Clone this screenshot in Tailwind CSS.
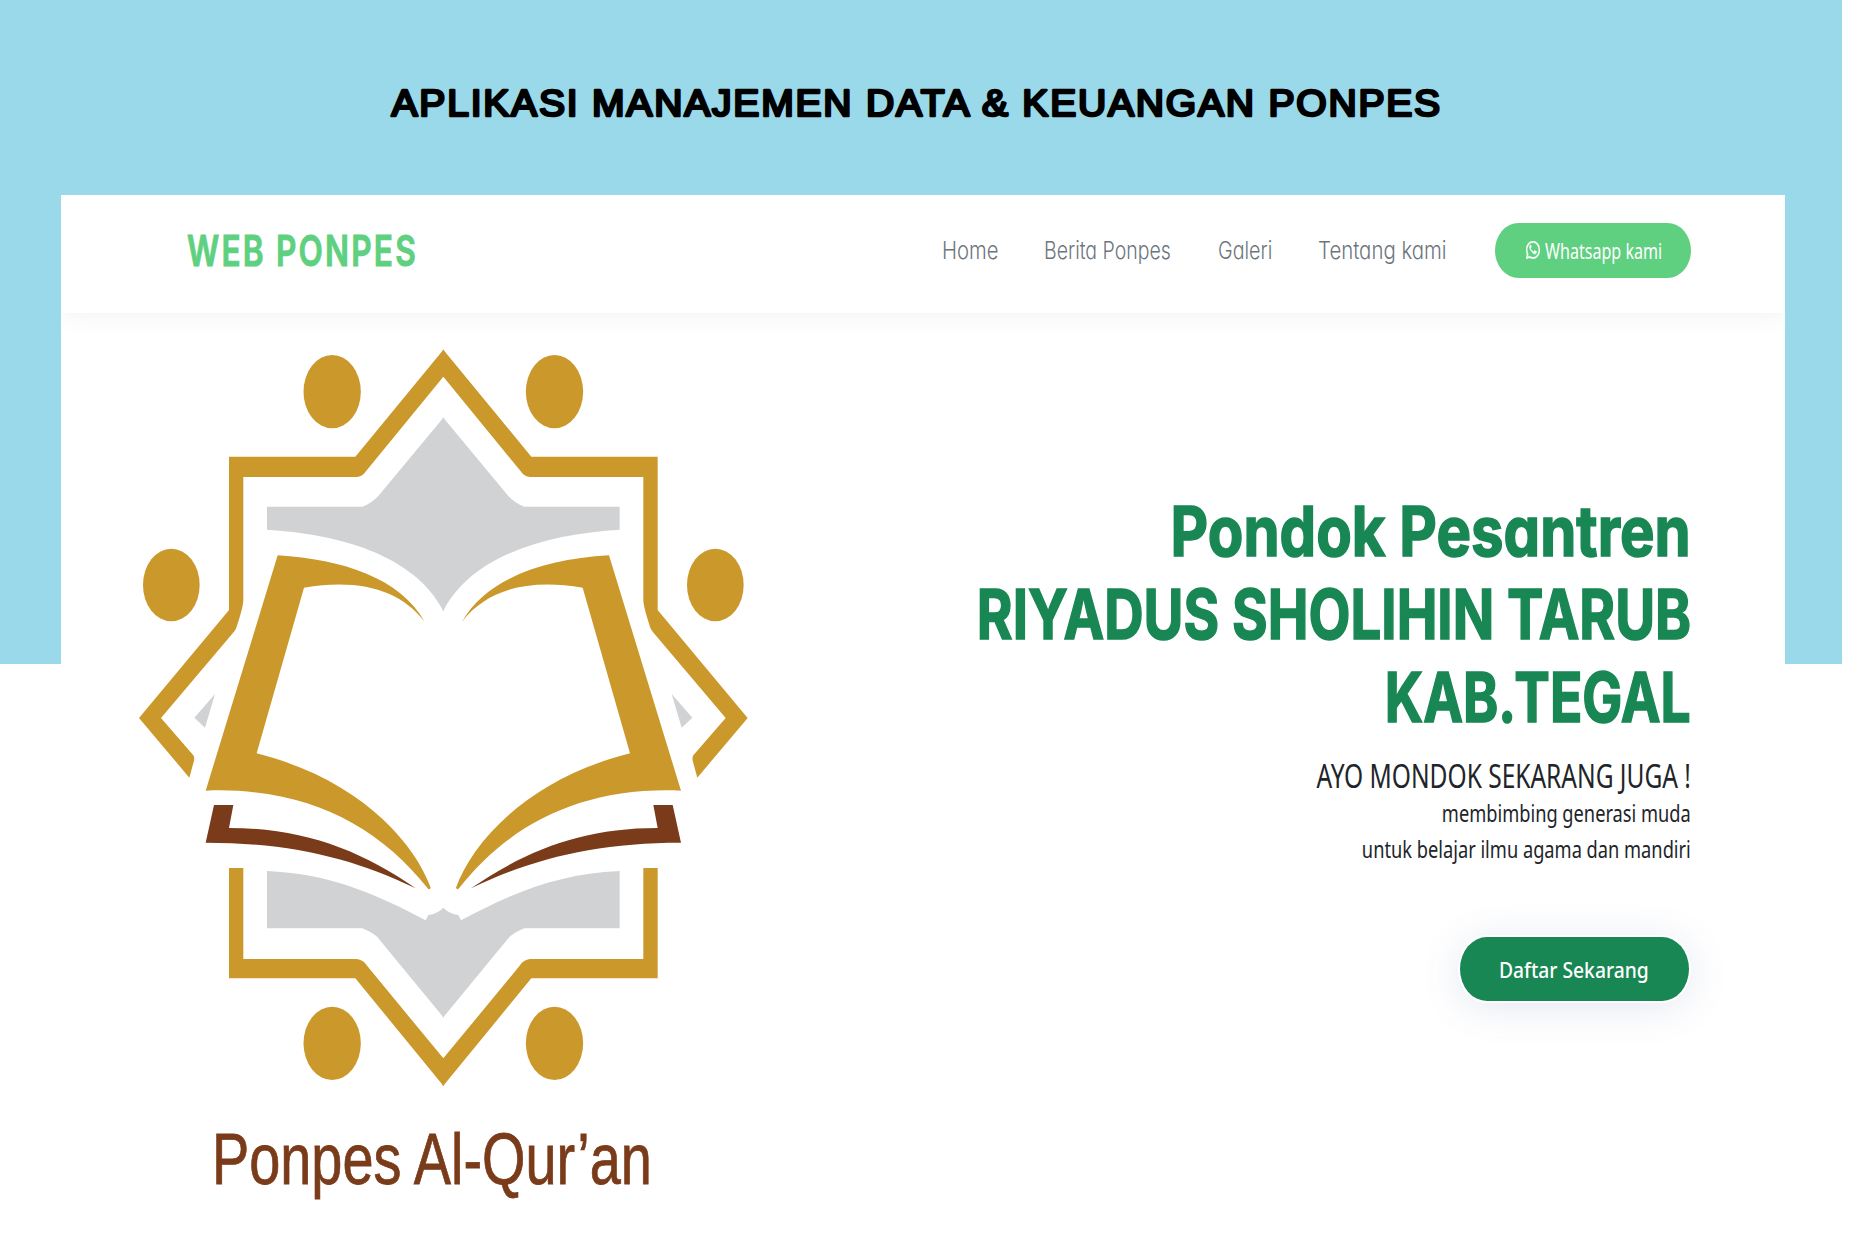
<!DOCTYPE html>
<html lang="id">
<head>
<meta charset="utf-8">
<title>Web Ponpes</title>
<script src="https://cdn.jsdelivr.net/npm/@tailwindcss/browser@4"></script>
</head>
<body class="h-[1260px] overflow-hidden bg-[linear-gradient(#9ad9ea,#9ad9ea)] bg-[length:1842px_664px] bg-no-repeat bg-white">
<div class="flex h-[195px] flex-col pt-[73px]">
  <h1 class="ml-[389px] w-[1060px]">
    <svg class="block h-[60px] w-[1060px] overflow-visible" viewBox="0 0 1060 60"><g transform="translate(2.5 42.5) scale(1.07 1)"><text x="0" y="0" textLength="980" lengthAdjust="spacing" class="fill-black stroke-black stroke-[2.6] font-['Liberation_Sans',sans-serif] text-[36.5px] font-normal" stroke-linejoin="round" stroke-linecap="round">APLIKASI MANAJEMEN DATA &amp; KEUANGAN PONPES</text></g></svg>
  </h1>
</div>
<div class="ml-[61px] h-[1065px] w-[1724px] bg-white">
  <header class="relative flex h-[118px] items-center bg-white pb-[7px] pl-[126px] shadow-[0_2px_24px_rgba(0,0,0,0.06)] [clip-path:inset(0_0_-40px_0)]">
    <a class="block w-[755px]"><span class="mb-[2px] inline-block origin-left scale-x-[0.735] whitespace-nowrap font-[Inter,sans-serif] text-[43px] leading-[60px] font-semibold tracking-[3px] text-[#5fd080] [-webkit-text-stroke:1px_#5fd080]">WEB PONPES</span></a>
    <nav class="flex items-center font-[Inter,sans-serif] text-[24px] leading-9 font-light whitespace-nowrap text-[#6c757d] [font-feature-settings:'cv11']">
      <a class="block w-[102px]"><span class="inline-block origin-left scale-x-[0.845]">Home</span></a>
      <a class="block w-[174px]"><span class="inline-block origin-left scale-x-[0.812]">Berita Ponpes</span></a>
      <a class="block w-[100px]"><span class="inline-block origin-left scale-x-[0.82]">Galeri</span></a>
      <a class="block w-[177px]"><span class="inline-block origin-left scale-x-[0.85]">Tentang kami</span></a>
    </nav>
    <a class="flex h-[55px] w-[196px] shrink-0 items-center gap-[5px] rounded-[24px/28px] bg-[#5fd080] pl-[31px] text-white">
      <svg class="mb-[2px] h-[18px] w-[14px] shrink-0" viewBox="0 0 16 16" preserveAspectRatio="none" fill="currentColor" stroke="currentColor" stroke-width=".4"><path d="M13.601 2.326A7.854 7.854 0 0 0 7.994 0C3.627 0 .068 3.558.064 7.926c0 1.399.366 2.76 1.057 3.965L0 16l4.204-1.102a7.933 7.933 0 0 0 3.79.965h.004c4.368 0 7.926-3.558 7.93-7.93A7.898 7.898 0 0 0 13.6 2.326zM7.994 14.521a6.573 6.573 0 0 1-3.356-.92l-.24-.144-2.494.654.666-2.433-.156-.251a6.56 6.56 0 0 1-1.007-3.505c0-3.626 2.957-6.584 6.591-6.584a6.56 6.56 0 0 1 4.66 1.931 6.557 6.557 0 0 1 1.928 4.66c-.004 3.639-2.961 6.592-6.592 6.592zM5.3 3.6c-.5 0-1.4.8-1.3 2 .1 1.100.9 2.300 2 3.500 1.300 1.300 2.700 2.300 4 2.400 1.100.1 2-.7 2.100-1.500.1-.5 0-.7-.3-.8l-1.600-.8c-.3-.1-.5 0-.7.3l-.6.7c-.2.2-.4.1-.7 0-1.200-.6-2.100-1.400-2.800-2.600-.1-.3 0-.4.1-.6l.5-.7c.1-.2 0-.4 0-.5L5.900 3.900c-.1-.3-.3-.3-.6-.3z"/></svg>
      <span class="w-[164px] shrink-0 origin-left scale-x-[0.715] whitespace-nowrap font-['Noto_Sans',sans-serif] text-[22.5px] leading-8">Whatsapp kami</span>
    </a>
  </header>
  <main class="flex">
    <figure class="w-[700px] pt-[27px] pl-[69px]">
      <svg class="block h-[755px] w-[627px]" viewBox="0 0 1881 2265">
        <defs>
          <g id="half">
            <g fill="#cb992b">
              <ellipse cx="606.5" cy="155" rx="86" ry="110"/>
              <ellipse cx="124" cy="735" rx="85" ry="109"/>
              <ellipse cx="606.5" cy="2110" rx="86" ry="110"/>
              <path d="M940 29 H942 V110 H940 L706 396 Q697 409 680 411 H340 V780 Q340 800 320 860 Q318 868 312 875 L93 1134 L190 1246 Q194 1252 192 1262 L178 1313 L27 1134 L297 810 V350 H676Z"/>
              <path d="M443 646 L227 1352 C520 1340 740 1450 893 1645 Q898 1652 902 1643 C850 1500 680 1315 380 1240 L522 743 C690 715 810 750 884 845 C810 715 640 658 443 646Z"/>
              <path d="M297 1584 H340 V1857 H680 Q700 1859 710 1876 L940 2155 H942 V2237 H940 L676 1915 H297Z"/>
            </g>
            <g fill="#d1d2d4">
              <path d="M940 233 H942 V812 H940 C850 640 620 582 411 569 V500 H697 Q725 490 745 468Z"/>
              <path d="M411 1593 C590 1600 730 1657 887 1741 L895 1725 Q920 1722 940 1704 H942 V2032 H940 L745 1795 Q735 1781 697 1765 H411Z"/>
              <path d="M255 1062 L225 1163 L193 1133Z"/>
            </g>
            <path fill="#793b19" d="M252 1395 H310 L297 1464 C520 1464 690 1530 857 1645 C670 1555 480 1508 227 1508Z"/>
          </g>
        </defs>
        <use href="#half"/>
        <use href="#half" transform="translate(1880 0) scale(-1 1)"/>
      </svg>
      <figcaption class="ml-[82px] h-[90px] w-[440px] pt-[19px]"><span class="inline-block origin-left scale-x-[0.78] whitespace-nowrap font-['Liberation_Sans',sans-serif] text-[71.6px] leading-[90px] text-[#793b19] [-webkit-text-stroke:0.8px_#793b19]">Ponpes Al-Qur’an</span></figcaption>
    </figure>
    <section class="flex w-[930px] flex-col items-end pt-[177px]">
      <h2 class="flex flex-col items-end font-[Inter,sans-serif] text-[69px] leading-[83px] font-bold whitespace-nowrap text-[#198754] [-webkit-text-stroke:1.6px_#198754] [font-feature-settings:'cv11']">
        <span class="block origin-right scale-x-[0.842]">Pondok Pesantren</span>
        <span class="block origin-right scale-x-[0.79]">RIYADUS SHOLIHIN TARUB</span>
        <span class="block origin-right scale-x-[0.773]">KAB.TEGAL</span>
      </h2>
      <p class="mt-[16px] origin-right scale-x-[0.73] whitespace-nowrap font-['Noto_Sans',sans-serif] text-[33.6px] leading-10 text-[#212529]">AYO MONDOK SEKARANG JUGA !</p>
      <p class="origin-right scale-x-[0.76] text-right whitespace-nowrap font-['Noto_Sans',sans-serif] text-[24px] leading-9 text-[#212529]">membimbing generasi muda<br>untuk belajar ilmu agama dan mandiri</p>
      <a class="mt-[70px] mr-[2px] flex h-[64px] w-[229px] items-center rounded-[27px/32px] bg-[#198754] pl-[39px] shadow-[0_0_0_2px_#fff,0_5px_40px_rgba(82,100,160,0.16)]"><span class="origin-left scale-x-[0.875] whitespace-nowrap font-['Noto_Sans',sans-serif] text-[22px] leading-8 font-medium text-white">Daftar Sekarang</span></a>
    </section>
  </main>
</div>
</body>
</html>
